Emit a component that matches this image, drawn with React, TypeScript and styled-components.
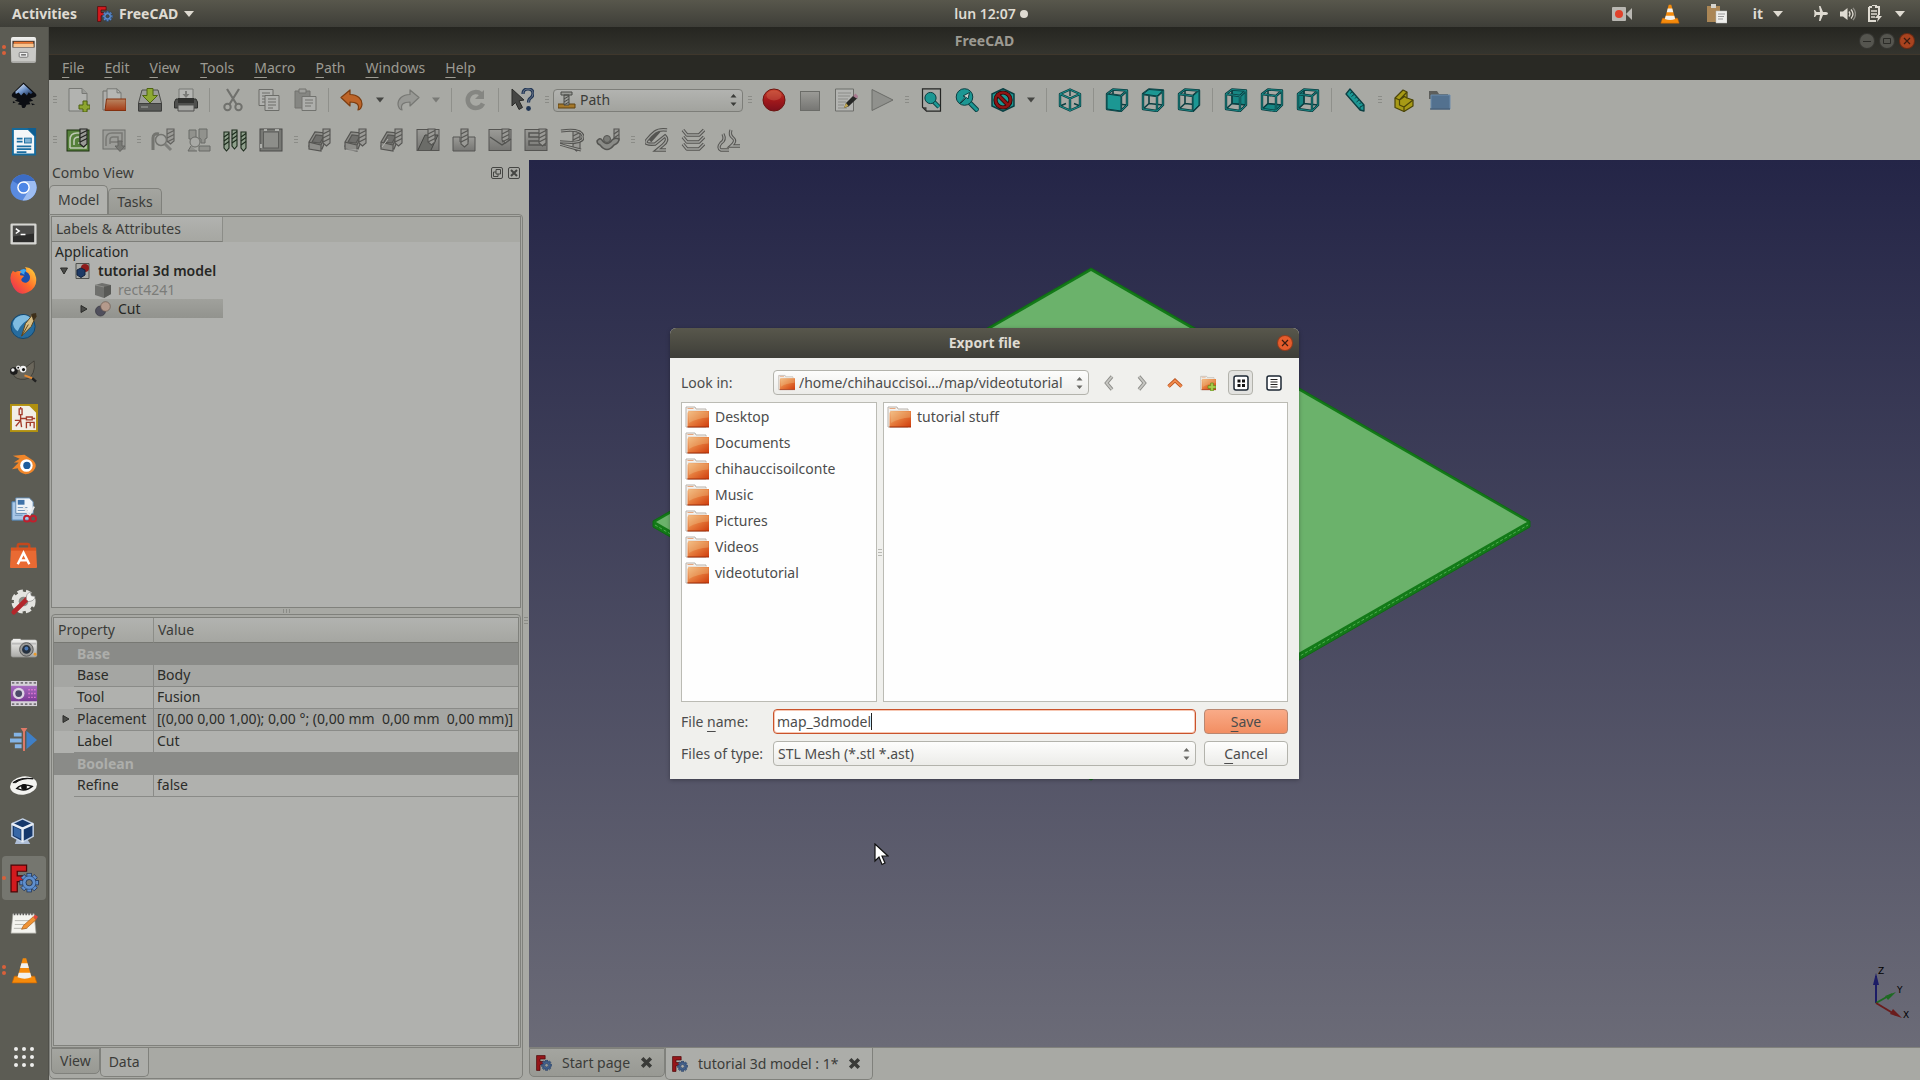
import React from "react";
import styled, { createGlobalStyle, css } from "styled-components";

const GlobalStyle = createGlobalStyle`
  *, *::before, *::after { box-sizing: border-box; }
  html, body { margin: 0; height: 100%; }
  #root { height: 100%; }
  body, button, input, select, table {
    font-family: "Noto Sans", "Open Sans", sans-serif;
    font-size: 14px;
    line-height: 20px;
  }
  button, input, select { margin: 0; padding: 0; border: 0; background: none; color: inherit; }
  ul { margin: 0; padding: 0; list-style: none; }
  svg { display: block; flex: none; }
  u { text-underline-offset: 4px; text-decoration-thickness: 1px; }
`;

const c = {
  panel: "#a8a9a4",
  field: "#b0b1ae",
  line: "#80817c",
  text: "#3b3c39",
};

/* ---------- shell ---------- */

const Desktop = styled.div`
  position: relative;
  display: flex;
  flex-direction: column;
  min-height: 100vh;
  background: ${c.panel};
  color: ${c.text};
  overflow: hidden;
`;

const TopBar = styled.header`
  display: grid;
  grid-template-columns: 1fr auto 1fr;
  align-items: center;
  height: 27px;
  background: linear-gradient(#58574c, #3e3e38);
  color: #dfdbd2;
`;

const BarGroup = styled.div<{ $end?: boolean }>`
  display: flex;
  align-items: center;
  gap: ${(p) => (p.$end ? 18 : 20)}px;
  padding: 0 ${(p) => (p.$end ? 15 : 12)}px 0 12px;
  justify-content: ${(p) => (p.$end ? "flex-end" : "flex-start")};
`;

const BarButton = styled.button<{ $gap?: number }>`
  display: flex;
  align-items: center;
  gap: ${(p) => p.$gap ?? 6}px;
  font-weight: 700;
`;

const Clock = styled(BarButton)`
  padding-left: 62px;
  gap: 4px;
  font-weight: 600;
`;

const Dot = styled.span`
  width: 8px;
  height: 8px;
  border-radius: 50%;
  background: #dfdbd2;
`;

const TrayGroup = styled.div<{ $gap: number; $after?: number }>`
  display: flex;
  align-items: center;
  gap: ${(p) => p.$gap}px;
  margin-right: ${(p) => p.$after ?? 0}px;
`;

const Body = styled.div`
  flex: 1;
  display: flex;
  min-height: 0;
`;

const Dock = styled.nav`
  flex: none;
  width: 49px;
  display: flex;
  flex-direction: column;
  background: #5c5c54;
  border-right: 1px solid #50504a;
`;

const DockButton = styled.button<{ $active?: boolean; $last?: boolean }>`
  position: relative;
  display: grid;
  place-items: center;
  width: 44px;
  height: 44px;
  margin: 1px 2px;
  border-radius: 4px;
  background: ${(p) => (p.$active ? "#75766f" : "transparent")};
  ${(p) => p.$last && css`margin-top: auto;`}
`;

const Running = styled.span`
  position: absolute;
  left: 0;
  top: 0;
  bottom: 0;
  display: flex;
  flex-direction: column;
  justify-content: center;
  gap: 2px;
  & > i {
    width: 4px;
    height: 4px;
    border-radius: 50%;
    background: #d9603a;
  }
`;

const Window = styled.main`
  flex: 1;
  min-width: 0;
  display: flex;
  flex-direction: column;
`;

const TitleBar = styled.div`
  display: grid;
  grid-template-columns: 1fr auto 1fr;
  align-items: center;
  height: 28px;
  padding: 0 5px;
  background: linear-gradient(#262621, #34342e);
  border-bottom: 1px solid #3f372c;
  color: #9c9a92;
  font-weight: 700;
`;

const WindowControls = styled.div`
  grid-column: 3;
  display: flex;
  justify-content: flex-end;
  gap: 4px;
`;

const RoundButton = styled.button<{ $tone: string }>`
  display: grid;
  place-items: center;
  width: 16px;
  height: 16px;
  border-radius: 50%;
  background: ${(p) => p.$tone};
  border: 1px solid rgba(0, 0, 0, 0.35);
`;

const TitleText = styled.span`
  grid-column: 2;
`;

const MenuBar = styled.nav`
  display: flex;
  align-items: center;
  height: 25px;
  padding: 0 3px;
  background: #292924;
  color: #9c9a92;
`;

const MenuButton = styled.button`
  padding: 0 10px;
`;

const ToolArea = styled.div`
  height: 80px;
  display: flex;
  flex-direction: column;
`;

const ToolRow = styled.div`
  display: flex;
  align-items: center;
  height: 40px;
`;

const ToolButton = styled.button`
  display: grid;
  place-items: center;
  width: 36px;
  height: 36px;
`;

const DropButton = styled.button`
  display: grid;
  place-items: center;
  width: 20px;
  height: 36px;
`;

const Grip = styled.span`
  width: 13px;
  height: 8px;
  background: repeating-linear-gradient(#8b8c87 0 1px, transparent 1px 3px) center / 4px 8px no-repeat;
  &:first-child { width: 11px; }
`;

const Separator = styled.span`
  width: 11px;
  height: 24px;
  background: linear-gradient(#8f908b, #8f908b) center / 1px 100% no-repeat;
`;

/* ---------- combo boxes ---------- */

const ComboShell = styled.span<{ $dim?: boolean; $width?: number }>`
  display: flex;
  align-items: center;
  gap: 4px;
  ${(p) => (p.$width ? css`width: ${p.$width}px;` : css`width: 100%;`)}
  height: ${(p) => (p.$dim ? 23 : 25)}px;
  padding: 0 5px 0 4px;
  border: 1px solid ${(p) => (p.$dim ? "#7d7e79" : "#b3b3ac")};
  border-radius: 4px;
  background: ${(p) => (p.$dim ? "linear-gradient(#b2b3b0, #a2a39e)" : "linear-gradient(#fdfdfc, #ecece9)")};
  color: ${(p) => (p.$dim ? c.text : "#4c4c4c")};
`;

const ComboSelect = styled.select`
  appearance: none;
  flex: 1;
  min-width: 0;
  height: 20px;
  outline: none;
`;

function Combo(props: { id: string; label?: string; value: string; icon?: React.ReactNode; dim?: boolean; width?: number }) {
  return (
    <ComboShell $dim={props.dim} $width={props.width}>
      {props.icon}
      <ComboSelect id={props.id} aria-label={props.label} defaultValue={props.value}>
        <option>{props.value}</option>
      </ComboSelect>
      <svg width="7" height="14" viewBox="0 0 7 14" fill={props.dim ? "#3b3c39" : "#6a6a66"}>
        <path d="M.5 4.500 3.500 1l3 3.500zM.5 9.500 3.500 13l3-3.500z" />
      </svg>
    </ComboShell>
  );
}

/* ---------- left panel ---------- */

const Work = styled.div`
  flex: 1;
  display: flex;
  min-height: 0;
`;

const SidePanel = styled.aside`
  flex: none;
  width: 474px;
  display: flex;
  flex-direction: column;
  padding-bottom: 1px;
`;

const PanelHead = styled.div`
  display: flex;
  align-items: center;
  gap: 5px;
  height: 25px;
  padding: 0 3px;
`;

const PanelTitle = styled.h2`
  flex: 1;
  margin: 0;
  font: inherit;
`;

const TabRow = styled.div<{ $bottom?: boolean }>`
  display: flex;
  align-items: ${(p) => (p.$bottom ? "flex-start" : "flex-end")};
  height: 29px;
`;

const Tab = styled.button<{ $active?: boolean; $bottom?: boolean }>`
  display: flex;
  align-items: center;
  justify-content: center;
  height: ${(p) => (p.$active ? 29 : 26)}px;
  padding: 0 8px;
  border: 1px solid ${c.line};
  background: ${(p) => (p.$active ? (p.$bottom ? "#acada9" : "#b0b1ad") : "linear-gradient(#a4a5a0, #989993)")};
  ${(p) =>
    p.$bottom
      ? css`border-top-width: ${p.$active ? 0 : 1}px; border-radius: 0 0 5px 5px;`
      : css`border-bottom-width: 0; border-radius: 5px 5px 0 0;`}
  & + & { border-left-width: ${(p) => (p.$active ? 1 : 0)}px; }
`;

const MdiTab = styled(Tab)`
  height: ${(p) => (p.$active ? 32 : 29)}px;
  gap: 10px;
  padding: 0 11px 0 6px;
`;

const Pane = styled.div`
  flex: 1;
  min-height: 0;
  display: flex;
  flex-direction: column;
  padding: 1px;
  border: 1px solid ${c.line};
  border-radius: 0 4px 5px 5px;
`;

const TreeBox = styled.div`
  flex: 393 1 0;
  min-height: 0;
  border: 1px solid ${c.line};
  background: ${c.field};
`;

const TreeHead = styled.div`
  height: 25px;
  background: ${c.panel};
`;

const TreeHeadCell = styled.div`
  width: 171px;
  height: 25px;
  padding: 2px 4px;
  border-right: 1px solid #8c8d88;
  border-bottom: 1px solid #7d7e79;
  background: linear-gradient(#b1b2af, #a6a7a2);
`;

const TreeRow = styled.li<{ $level: number; $selected?: boolean; $muted?: boolean; $bold?: boolean }>`
  display: flex;
  align-items: center;
  gap: 7px;
  width: 171px;
  height: 19px;
  white-space: nowrap;
  padding-left: ${(p) => [3, 8, 28, 43][p.$level]}px;
  color: ${(p) => (p.$muted ? "#7b7c79" : "#262724")};
  font-weight: ${(p) => (p.$bold ? 600 : 400)};
  ${(p) => p.$selected && css`background: linear-gradient(#a0a19c, #92938e);`}
`;

const HSplit = styled.div`
  height: 6px;
  background: repeating-linear-gradient(90deg, #8b8c87 0 1px, transparent 1px 3px) center / 7px 4px no-repeat;
`;

const VSplit = styled.div`
  width: 6px;
  background: repeating-linear-gradient(#8b8c87 0 1px, transparent 1px 3px) center / 4px 7px no-repeat;
`;

const PropFrame = styled.div`
  flex: 433 1 0;
  min-height: 0;
  display: flex;
  padding: 2px 1px 1px;
  border: 1px solid ${c.line};
  border-radius: 4px 4px 0 0;
`;

const PropBox = styled.div`
  flex: 1;
  border: 1px solid ${c.line};
  background: ${c.field};
`;

const PropTable = styled.table`
  width: 100%;
  table-layout: fixed;
  border-collapse: separate;
  border-spacing: 0;
  color: #2b2c29;
  white-space: nowrap;
  th, td { height: 22px; padding: 0; text-align: left; font-weight: 400; }
`;

const HeadCell = styled.th`
  && { height: 25px; padding: 0 4px; color: ${c.text}; }
  background: linear-gradient(#b2b3b0, #a5a6a1);
  border-bottom: 1px solid #777873;
  & + & { border-left: 1px solid #8c8d88; }
`;

const GroupCell = styled.th`
  && { padding-left: 23px; font-weight: 700; }
  background: #8a8b88;
  color: #adaeab;
`;

const PropRow = styled.tr<{ $alt?: boolean }>`
  background: ${(p) => (p.$alt ? "#a5a6a3" : c.field)};
  td, th { border-bottom: 1px solid #8a8b88; }
  td:first-child { border-bottom-color: transparent; }
  && > td:first-child { padding-left: 8px; }
  && > th { padding-left: 3px; }
  && > td:last-child { padding-left: 3px; border-left: 1px solid #8a8b88; }
`;

/* ---------- 3D view ---------- */

const Mdi = styled.section`
  flex: 1;
  min-width: 0;
  display: flex;
  flex-direction: column;
`;

const Viewport = styled.div`
  position: relative;
  flex: 1;
  min-height: 0;
  background: linear-gradient(#242547, #6b6b77);
  & > svg:first-child { width: 100%; height: 100%; }
`;

const AxisCross = styled.div`
  position: absolute;
  right: 10px;
  bottom: 25px;
`;

const MdiTabs = styled.div`
  display: flex;
  align-items: flex-start;
  height: 33px;
  border-top: 1px solid ${c.line};
`;

/* ---------- dialog ---------- */

const Overlay = styled.div`
  position: absolute;
  inset: 27px 0 0 49px;
  display: grid;
  place-items: center;
`;

const Dialog = styled.section`
  width: 629px;
  border-radius: 6px 6px 0 0;
  background: #f0f0ed;
  color: #4c4c4c;
  box-shadow: 0 1px 4px rgba(0, 0, 0, 0.3);
`;

const DialogTitle = styled.div`
  display: grid;
  grid-template-columns: 1fr auto 1fr;
  align-items: center;
  height: 30px;
  padding: 0 6px;
  border-radius: 6px 6px 0 0;
  background: linear-gradient(#58574c, #3e3e38);
  color: #dfdbd2;
  font-weight: 700;
`;

const DialogBody = styled.form`
  display: flex;
  flex-direction: column;
  gap: 7px;
  padding: 12px 11px 13px;
`;

const LookRow = styled.div`
  display: grid;
  grid-template-columns: 92px 316px 1fr;
  align-items: center;
  height: 25px;
`;

const NavButtons = styled.div`
  display: flex;
  padding-left: 3px;
`;

const NavButton = styled.button<{ $on?: boolean }>`
  display: grid;
  place-items: center;
  width: 25px;
  height: 25px;
  margin: 0 4px;
  border-radius: 4px;
  ${(p) => p.$on && css`background: #e2e2df; border: 1px solid #b3b3ac;`}
`;

const Lists = styled.div`
  display: grid;
  grid-template-columns: 196px 6px 1fr;
  height: 300px;
`;

const FileList = styled.ul`
  padding: 1px 3px;
  border: 1px solid #bbbbb4;
  background: #fefefe;
`;

const ListSplit = styled.div`
  background: repeating-linear-gradient(#b9b9b4 0 1px, transparent 1px 3px) center / 4px 7px no-repeat;
`;

const FileRow = styled.li`
  display: flex;
  align-items: center;
  gap: 6px;
  height: 26px;
`;

const FieldRow = styled.div`
  display: grid;
  grid-template-columns: 92px 1fr 84px;
  align-items: center;
  height: 25px;
`;

const FieldCell = styled.div`
  padding-right: 8px;
`;

const NameBox = styled.div`
  display: flex;
  align-items: center;
  height: 25px;
  padding: 0 3px;
  border: 1px solid #c9532c;
  border-radius: 4px;
  background: #fff;
  box-shadow: inset 0 0 0 1px #f6c7b3;
`;

const NameInput = styled.input`
  field-sizing: content;
  outline: none;
  height: 20px;
`;

const Caret = styled.span`
  width: 1px;
  height: 17px;
  background: #222;
`;

const PushButton = styled.button<{ $primary?: boolean }>`
  height: 25px;
  border-radius: 4px;
  border: 1px solid ${(p) => (p.$primary ? "#b98872" : "#b3b3ac")};
  background: ${(p) => (p.$primary ? "linear-gradient(#f9ab88, #f28e62)" : "linear-gradient(#fefefd, #ecece9)")};
`;

const Pointer = styled.div`
  position: absolute;
  left: 874px;
  top: 843px;
`;

/* ---------- icons ---------- */

const Defs = () => (
  <svg width="0" height="0" aria-hidden="true">
    <defs>
      <linearGradient id="orange" x1="0" y1="0" x2="1" y2="1">
        <stop offset="0" stopColor="#f3b982" /><stop offset=".5" stopColor="#e5793a" /><stop offset="1" stopColor="#cf3c0c" />
      </linearGradient>
      <linearGradient id="dimOrange" x1="0" y1="0" x2="0" y2="1">
        <stop offset="0" stopColor="#b98662" /><stop offset="1" stopColor="#a63c16" />
      </linearGradient>
      <linearGradient id="silver" x1="0" y1="0" x2="0" y2="1">
        <stop offset="0" stopColor="#f0f0ee" /><stop offset="1" stopColor="#a9a9a6" />
      </linearGradient>
      <linearGradient id="grey" x1="0" y1="0" x2="0" y2="1">
        <stop offset="0" stopColor="#9b9b97" /><stop offset="1" stopColor="#767673" />
      </linearGradient>
      <linearGradient id="red" x1="0" y1="0" x2="0" y2="1">
        <stop offset="0" stopColor="#c9452f" /><stop offset=".5" stopColor="#a3191b" /><stop offset="1" stopColor="#7c0f1c" />
      </linearGradient>
      <linearGradient id="purple" x1="0" y1="0" x2="0" y2="1">
        <stop offset="0" stopColor="#a86bc0" /><stop offset="1" stopColor="#7a3a96" />
      </linearGradient>
      <linearGradient id="ink" x1="0" y1="0" x2="1" y2="1">
        <stop offset="0" stopColor="#fff" /><stop offset=".5" stopColor="#6f93c8" /><stop offset="1" stopColor="#0d1f40" />
      </linearGradient>
      <linearGradient id="fox" x1="0" y1="1" x2="1" y2="0">
        <stop offset="0" stopColor="#e5245e" /><stop offset=".5" stopColor="#ff6a2a" /><stop offset="1" stopColor="#ffde3b" />
      </linearGradient>
    </defs>
  </svg>
);

const Down = ({ fill = "#dfdbd2", w = 10 }: { fill?: string; w?: number }) => (
  <svg width={w} height="6" viewBox="0 0 10 6"><path d="M0 0h10L5 6z" fill={fill} /></svg>
);

const Gear = ({ x, y, r, fill, hole }: { x: number; y: number; r: number; fill: string; hole: string }) => (
  <g transform={`translate(${x} ${y})`}>
    {[0, 45, 90, 135].map((a) => (
      <rect key={a} x={-r * 0.24} y={-r} width={r * 0.48} height={r * 2} transform={`rotate(${a})`} fill={fill} stroke="#1b3156" strokeWidth=".7" />
    ))}
    <circle r={r * 0.72} fill={fill} stroke="#1b3156" strokeWidth=".5" />
    <circle r={r * 0.34} fill={hole} stroke="#1b3156" strokeWidth=".8" />
  </g>
);

const Logo = ({ size, hole = "#75766f", dim }: { size: number; hole?: string; dim?: boolean }) => (
  <svg width={size} height={size} viewBox="0 0 28 28">
    <path d="M1 1h15v6H7v4.500h7v5.500H7v10H1z" fill={dim ? "#96161a" : "#d21a1e"} stroke="#4a0708" strokeWidth="1.200" />
    <Gear x={18.5} y={18} r={9} fill={dim ? "#46648f" : "#5f8fce"} hole={hole} />
  </svg>
);

const Cone = ({ size }: { size: number }) => (
  <svg width={size} height={size} viewBox="0 0 24 24">
    <path d="M3 17h18l2 6H1z" fill="#f58a0b" stroke="#c96500" strokeWidth=".6" />
    <path d="M10.500 1h3l5 18q-6.500 3-13 0z" fill="#f58a0b" />
    <path d="M9.300 5.500h5.400l1.200 4.300H8.100zM6.900 14h10.200l1.100 4q-6 2.500-12.400 0z" fill="#f1f1ef" />
  </svg>
);

const dockIcons: Record<string, React.ReactNode> = {
  Files: (<>
    <rect x="1" y="1" width="26" height="27" rx="2" fill="url(#silver)" />
    <path d="M2.500 5h23v7h-23z" fill="#4a3a30" /><path d="M4 6h20v2H4z" fill="#f0762e" /><path d="M3.500 8h21v3.500h-21z" fill="#f8c48f" />
    <path d="M2 12.500h24V26H2z" fill="#c9c9c6" /><rect x="9.500" y="17" width="9" height="5" rx="1" fill="#eee" stroke="#777" /><path d="M11.500 19.500h5" stroke="#666" strokeWidth="1.500" />
  </>),
  Inkscape: (<>
    <path d="M14 .5 26.500 12q2 2.500-.5 3.500l-5 1.500 3 2.500-4 1 1 2.500-4 .5q-1 3.500-3 3.500t-2-3l-4-1 2-2-5-1.500 2.500-2-5-2q-1.500-1.500 0-3.500z" fill="#0b0d12" />
    <path d="M14 2 23.500 11q-2 3-4-.5l-2 3.500-3-3-3 3-2.500-3-3 1.500L5.500 10z" fill="url(#ink)" />
    <path d="m22 22 4 1-3 1zM3 20l3 1-3 1z" fill="#0b0d12" />
  </>),
  Writer: (<>
    <path d="M3 1h16l7 7v19.500H3z" fill="#f4f6f8" stroke="#156a9c" strokeWidth="2" /><path d="M18 0h9v9z" fill="#0f5f93" />
    <path d="M7 11h6M7 14h6M7 19h15M7 22h15M7 25h10" stroke="#1d6ea0" strokeWidth="1.800" /><rect x="15" y="10.500" width="7" height="5" fill="#7fb2d4" stroke="#1d6ea0" />
  </>),
  Chromium: (<>
    <circle cx="14" cy="14" r="13.500" fill="#5a8be0" /><path d="M14 14 2.500 7A13.500 13.500 0 0 1 25.700 7.300H14z" fill="#3c6cc4" /><path d="M25.700 7.300A13.500 13.500 0 0 1 13 27.500l6.500-10.500q1.500-5-5.500-9.700z" fill="#9dbdf2" />
    <circle cx="14" cy="14" r="6.500" fill="#fff" /><circle cx="14" cy="14" r="5" fill="#4d86e6" />
  </>),
  Terminal: (<>
    <rect x=".5" y="3.500" width="27" height="22" rx="1.500" fill="#d6d6d2" /><rect x="3" y="6" width="22" height="17" fill="#2c2c2b" /><path d="M3 6h22v8L3 17z" fill="#4b4b49" />
    <path d="m6 9 3.500 2.500L6 14M11 15h5" stroke="#fff" strokeWidth="1.500" fill="none" />
  </>),
  Firefox: (<>
    <circle cx="14" cy="14.500" r="11" fill="#1c4fae" /><path d="M9 6q5-5 9-1-4 1-3 4z" fill="#3ea6ef" />
    <path d="M3 5q1 1 2.500 1.500Q9 4 12 6q-2 1-1.500 3.500l3.500.5q1 1-1.500 2.500l-1 2q2 4 6 2.500 4-2 3-7-1-3-4-4 1-3-1-5 10 1 11.500 11T19 27 3.500 22 3 5z" fill="url(#fox)" />
  </>),
  Scribus: (<>
    <circle cx="13.500" cy="15" r="12.500" fill="#276c9e" stroke="#13466e" /><path d="M3 12a11 11 0 0 1 19-5Q12 10 8 20q-4-2-5-8z" fill="#7fbbe0" />
    <path d="m12 25 4-13 8-10 3 2-5 11z" fill="#d7bd84" stroke="#5a431c" /><path d="m12 25 7-12" stroke="#5a431c" /><path d="m22 2 5-1 .5 4-3.500 4z" fill="#3d2f1a" />
  </>),
  Gimp: (<>
    <path d="M3 14q1-4 6-5l7 1 9-7q1 8-1 12-3 8-13 7-8-1-8-8z" fill="#6a665b" stroke="#33312b" strokeWidth=".7" />
    <circle cx="4" cy="13.500" r="4" fill="#1c1c1c" /><circle cx="3" cy="12.500" r="1.800" fill="#eee" />
    <circle cx="13.500" cy="11.500" r="3.500" fill="#f1f1f1" /><circle cx="14" cy="12" r="1.600" fill="#111" /><circle cx="8.500" cy="10" r="2.200" fill="#f1f1f1" /><circle cx="8.500" cy="10" r="1" fill="#111" />
    <path d="m15 18 8 3" stroke="#e28a34" strokeWidth="2" /><path d="m23 21 4 3.500" stroke="#222" strokeWidth="2.500" />
  </>),
  Eeschema: (<>
    <rect x="1" y="1" width="27" height="27" fill="#f2efe6" stroke="#b09010" strokeWidth="2" /><path d="M18 0h11v11z" fill="#b09010" />
    <path d="M11 3v2m0 6v6m-6 0h6m0-2h6m6 0h3M9.500 5h3v6h-3zM17 13.500h6v3h-6zM11 17l-5 6m5-6 1 7m5 1v-6h8v6m-4-6v4" stroke="#a33b2a" strokeWidth="1.400" fill="none" />
  </>),
  Blender: (<>
    <path d="m3 6 12-1 9 6q4 4 2 8-3 6-10 6-7-1-8-6l-6 1 7-7H4l6-4z" fill="#f0862a" /><circle cx="17" cy="16" r="6.500" fill="#fff" /><circle cx="17.500" cy="16" r="3.800" fill="#1f5d9c" />
  </>),
  Clips: (<>
    <path d="M2 6h15l3 4v15H2z" fill="#a9c8e8" stroke="#4d7fb0" /><path d="M6 2h14l4 4v12H6z" fill="#eef3f8" stroke="#5f87ad" /><rect x="8" y="4" width="7" height="5" fill="#3f72a8" /><path d="M8 12h10M8 15h10M5 20h8" stroke="#6e93b8" />
    <path d="m14 11 7 11m4-11-6 11" stroke="#e8e8e8" strokeWidth="2" /><circle cx="17.500" cy="23.500" r="3" fill="none" stroke="#c01f2d" strokeWidth="2" /><circle cx="24" cy="23.500" r="3" fill="none" stroke="#c01f2d" strokeWidth="2" />
  </>),
  Software: (<>
    <path d="M8 7V4q0-2 2-2h8q2 0 2 2v3" fill="none" stroke="#c3481d" strokeWidth="2.500" /><path d="M1 6h26l1 20q0 1-1 1H1q-1 0-1-1z" fill="#e96a33" /><path d="M1 6h26v3H1z" fill="#d9531f" />
    <path d="m8 23 6-12 6 12m-10-4h8" stroke="#fff" strokeWidth="2.500" fill="none" />
  </>),
  Tweaks: (<>
    <circle cx="14" cy="14" r="10" fill="#e4e4e0" stroke="#e4e4e0" strokeWidth="5" strokeDasharray="5.200 3" /><circle cx="14" cy="14" r="10" fill="#e4e4e0" /><circle cx="14" cy="14" r="5" fill="#8b8b86" />
    <path d="m4 25 14-14" stroke="#b3272b" strokeWidth="5" strokeLinecap="round" /><path d="M17 12q-1-6 4-8l1 4 4 1q-1 5-7 5z" fill="#f2f2ef" stroke="#888" strokeWidth=".7" />
  </>),
  Camera: (<>
    <rect x="1" y="6" width="27" height="18" rx="2" fill="url(#silver)" stroke="#7b7b78" strokeWidth=".5" /><path d="M3 5h8v2H3z" fill="#eee" /><path d="M2 9h25v2H2z" fill="#bbb" />
    <circle cx="17" cy="16" r="7" fill="#989896" stroke="#555" /><circle cx="17" cy="16" r="4.500" fill="#26313f" /><circle cx="17" cy="15" r="2" fill="#4a78b5" /><circle cx="26" cy="21" r="1.500" fill="#e99a2c" />
  </>),
  Recorder: (<>
    <rect x="1" y="1" width="27" height="26" fill="#d6d2d8" /><path d="M2 3h25M2 25h25" stroke="#77727a" strokeWidth="2" strokeDasharray="2.500 2" /><rect x="1" y="6" width="27" height="16" fill="url(#purple)" />
    <circle cx="9" cy="14" r="6" fill="#dcd2e2" /><circle cx="9" cy="14" r="3.500" fill="#4b4a68" /><path d="M19 10h8M19 14h8M19 18h8" stroke="#e87bd8" strokeWidth="1.500" strokeDasharray="1.500 1.500" />
  </>),
  Editor: (<>
    <path d="M4 7h8v4H4zM0 13h12v4H0zM5 19h7v4H5z" fill="#84b4e6" /><path d="m17 5 11 9.500L17 24z" fill="#3f7fc6" /><path d="M11 2h7l-2.500 4v20h-2V6z" fill="#e07a68" />
  </>),
  Viewer: (<>
    <ellipse cx="14" cy="14" rx="14" ry="9.500" transform="rotate(-8 14 14)" fill="#f3f3f0" /><path d="M3 11q8-6 21-4-12-1-18 4z" fill="#111" stroke="#111" /><path d="M7 17q6-6 16-2-6 5-13 3z" fill="none" stroke="#111" strokeWidth="1.500" /><circle cx="14.500" cy="15.500" r="3" fill="#111" />
  </>),
  VirtualBox: (<>
    <path d="M7 22h11l3 5H5z" fill="#aebed6" /><path d="m13 1 11 5v13l-11 6-11-6V6z" fill="#16386b" stroke="#c4d3e8" strokeWidth="1.500" /><path d="m2 6 11 5 11-5M13 11v14" stroke="#e8eef6" strokeWidth="2.500" fill="none" /><path d="m4 9 7 3.500v9L4 18z" fill="#3767a6" />
  </>),
  FreeCAD: null,
  Notes: (<>
    <path d="M3 4h22l2 20H1z" fill="#f4f4ef" stroke="#9a9a94" strokeWidth=".7" /><path d="M4 4h20" stroke="#5b5b58" strokeWidth="3" strokeDasharray="1.500 1.500" /><path d="M5 11h17M5 15h15M4 19h14" stroke="#b6b6b0" />
    <path d="m12 20 2-4 10-9 3 3-10 9z" fill="#f09334" stroke="#a85b12" strokeWidth=".7" /><path d="m24 7 2-2 3 2-2 3z" fill="#e2483a" />
  </>),
  VLC: null,
};

const runningCount: Record<string, number> = { Files: 2, FreeCAD: 1, VLC: 2 };

/* drill bit shared by the machining icons */
const Drill = ({ x, y = 0, w = 7, h = 18, line = "#555552", fill = "#9a9a96" }: { x: number; y?: number; w?: number; h?: number; line?: string; fill?: string }) => (
  <g transform={`translate(${x} ${y})`} stroke={line} strokeWidth="1.100" fill={fill}>
    <path d={`M0 1h${w}v${h - 4}l${-w / 2} 3${-w / 2 < 0 ? "" : " "}${-w / 2}-3z`} />
    <path d={`M0 6l${w}-3.500M0 10l${w}-3.500M0 14l${w}-3.500`} fill="none" />
  </g>
);

const TEAL = "#1c9793";
const EDGE = "#0b3f42";

const cubeFaces: Record<string, string> = {
  front: "M2 6l14 2v15L2 21z",
  top: "M2 6l6-4.500 14 1L16 8z",
  right: "M16 8l6-5.500V17l-6 6z",
  rear: "M8 1.500l14 1V17L8 15.500z",
  bottom: "M2 21l6-5.500L22 17l-6 6z",
  left: "M2 6l6-4.500v14L2 21z",
};

const Cube = ({ face }: { face: string }) => {
  const back = "M8 1.500v14L2 21M8 15.500 22 17";
  const outline = "M2 6l6-4.500 14 1V17l-6 6-14-2zM2 6l14 2v15M16 8l6-5.500";
  const hidden = ["rear", "bottom", "left"].includes(face);
  const panel = <path d={cubeFaces[face]} fill={hidden ? "#178784" : TEAL} stroke={EDGE} />;
  return (
    <g fill="none" strokeLinejoin="round">
      {hidden && panel}
      <path d={back} stroke={EDGE} strokeWidth="1.600" />
      <path d={outline} stroke={EDGE} strokeWidth="2.400" />
      <path d={outline} stroke={TEAL} strokeWidth=".8" />
      {!hidden && panel}
    </g>
  );
};

const sheets = (<g fill="#8d8d89" stroke="#555552" strokeWidth="1.200"><path d="M1 18 7 8l12 1-5 12z" /><path d="M1 14 7 4l11 1-5 12zM1 14v7l12 2v-6" /><path d="m4 14 4-7 8 1-4 7z" fill="#6f6f6c" /></g>);
const slab = <rect x="1" y="1.500" width="22" height="21" fill="url(#grey)" stroke="#555552" />;

const toolIcons: Record<string, React.ReactNode> = {
  New: (<><path d="M3 .5h13l5 5V23H3z" fill="#b2b3b0" stroke="#777874" /><path d="M16 .5v5h5" fill="#9b9c98" stroke="#777874" /><path d="M17 13h4v4h3v4h-3v3h-4v-3h-4v-4h4z" fill="#8da52f" stroke="#4c6110" /></>),
  Open: (<><path d="M1 22V3h6l2 2h3v17z" fill="#aeaeab" stroke="#6e6f6b" /><path d="M5 12V.8h10l4 4V12" fill="#b6b7b4" stroke="#777874" /><path d="M15 .8v4h4" fill="none" stroke="#777874" /><path d="M3 22.500 4.500 11H24v11.500z" fill="url(#dimOrange)" stroke="#83300f" /></>),
  Save: (<><path d="M4 2h16l3.500 13v8H.5v-8z" fill="#9c9d9a" stroke="#4d4e4b" /><path d="M.5 15.500h23V23H.5z" fill="#595a58" stroke="#3d3e3c" /><path d="M3 19h7" stroke="#a5a6a3" /><path d="M9 .5h6v7h4.500L12 15 4.500 7.500H9z" fill="#8ea932" stroke="#4f6513" /></>),
  Print: (<><path d="M5 1h14v11H5z" fill="#b4b5b2" stroke="#777874" /><path d="M11 3h2v3h2.500L12 10 8.500 6H11z" fill="#7b7c79" /><path d="M2 11h20l1.500 3v6H.5v-6z" fill="#4f504e" stroke="#2f302e" /><path d="M4 10h16v5H4z" fill="#30312f" /><path d="M4 17h16v6H4z" fill="#a5a6a3" stroke="#50514f" /></>),
  Cut: (<g fill="none" stroke="#70716d"><path d="m6 1 10 16M18 1 8 17" strokeWidth="2.200" /><circle cx="6.500" cy="19" r="3.200" strokeWidth="2" /><circle cx="17.500" cy="19" r="3.200" strokeWidth="2" /></g>),
  Copy: (<g fill="#b0b1ae" stroke="#6c6d69"><path d="M2 1.500h14v16H2z" /><path d="M5 5h8M5 8h4M5 11h3M5 14h3" /><path d="M8 7.500h14v15H8z" /><path d="M11 11h8M11 14h8M11 17h8M11 20h5" /></g>),
  Paste: (<g stroke="#72736f"><path d="M2 3h15v17H2z" fill="#858682" /><path d="M6 1h7v4H6z" fill="#a0a19d" /><path d="M9 8.500h14v14H9z" fill="#aeafac" /><path d="M12 12h8M12 15h8M12 18h6" /></g>),
  Undo: (<path d="M1 9.500 10 2v4.500c8 0 12 5 12 9.500 0 3-2 6-4 6 2-6-2-8-8-8V18z" fill="#bd6428" stroke="#7c3d10" strokeWidth="1.200" strokeLinejoin="round" />),
  Redo: (<path d="M23 9.500 14 2v4.500C6 6.500 2 11.500 2 16c0 3 2 6 4 6-2-6 2-8 8-8v4z" fill="#989995" stroke="#777874" strokeWidth="1.200" strokeLinejoin="round" />),
  Refresh: (<><path d="M20 15.500a8 8 0 1 1-2-9.500" fill="none" stroke="#858682" strokeWidth="4.500" /><path d="M21 2v9h-9z" fill="#858682" /></>),
  Help: (<><path d="m2 1 12 11-5 .8 3.500 6.700-3.500 2-3.500-7L2 18z" fill="#454644" stroke="#2a2b29" /><path d="M13 6q0-5 5-5t5 4.500q0 3-2.500 4.500-2 1.200-2 4.500" fill="none" stroke="#213654" strokeWidth="3.200" /><path d="M13 6q0-5 5-5t5 4.500q0 3-2.500 4.500-2 1.200-2 4.500" fill="none" stroke="#7c8798" strokeWidth=".8" /><circle cx="18.500" cy="20.500" r="2.400" fill="#213654" /></>),
  Record: (<><circle cx="12" cy="12" r="11" fill="url(#red)" stroke="#6c1510" /><ellipse cx="12" cy="7.500" rx="7.500" ry="5" fill="#d8775c" opacity=".35" /></>),
  Stop: (<rect x="2.500" y="3.500" width="19" height="19" fill="url(#grey)" stroke="#6b6c68" />),
  Macro: (<><path d="M1.500 1h18v22h-18z" fill="#b3b4b1" stroke="#6d6e6a" /><path d="M4 5h13M4 8h12M4 11h10M4 14h8M4 17h6M4 20h9" stroke="#8b8c88" /><path d="m10 20 2-5 8-8 3.500 3-9 8.500z" fill="#262725" /><path d="m10 20 2-5 2.500 3z" fill="#c3a84f" /><path d="m19 8 2.500-2.500 3 3-2 2z" fill="#a77b90" /></>),
  Play: (<path d="M2 1.500 23 12 2 22.500z" fill="#90918d" stroke="#6b6c68" strokeLinejoin="round" />),
  FitAll: (<><path d="M3.500.8h18v22.400h-14l-4-4z" fill="#a7a8a5" stroke="#252624" strokeWidth="1.200" /><path d="M3.500 19.200h4v4z" fill="#3a3b39" /><path d="m14 13 6 6" stroke={EDGE} strokeWidth="4.500" /><path d="m14 13 6 6" stroke={TEAL} strokeWidth="2.500" /><circle cx="11.500" cy="10" r="5.600" fill={TEAL} stroke={EDGE} /></>),
  FitSel: (<><path d="m14 14 9 9" stroke={EDGE} strokeWidth="5" /><path d="m14 14 8.500 8.500" stroke={TEAL} strokeWidth="3" /><circle cx="9.500" cy="9" r="8.300" fill={TEAL} stroke={EDGE} /><path d="m5 15 5.500-6L8 8l6.500-3.500L13 11l-1.500-1.500L6 15z" fill="#c8cfcb" stroke={EDGE} /></>),
  Style: (<><path d="M12 .8 23 6v12l-11 5.200L1 18V6z" fill={TEAL} stroke={EDGE} strokeWidth="1.500" /><circle cx="12" cy="12" r="7.500" fill="none" stroke="#2d0707" strokeWidth="4.200" /><path d="m7 7 10 10" stroke="#2d0707" strokeWidth="4.200" /><circle cx="12" cy="12" r="7.500" fill="none" stroke="#8e1414" strokeWidth="2.500" /><path d="m7 7 10 10" stroke="#8e1414" strokeWidth="2.500" /></>),
  Iso: (<g fill="none" strokeLinejoin="round"><path d="M12 1.500 22 6v12l-10 4.500L2 18V6zM2 6l10 4.500L22 6M12 10.500v12" stroke={EDGE} strokeWidth="2.400" /><path d="M12 1.500V8M2 18l6-2.500m14 2.500-6-2.500" stroke={EDGE} strokeWidth="1.400" /><path d="M12 1.500 22 6v12l-10 4.500L2 18V6zM2 6l10 4.500L22 6M12 10.500v12" stroke={TEAL} strokeWidth=".9" /></g>),
  Front: <Cube face="front" />, Top: <Cube face="top" />, Right: <Cube face="right" />, Rear: <Cube face="rear" />, Bottom: <Cube face="bottom" />, Left: <Cube face="left" />,
  Measure: (<><path d="m7 1 14 16v6l-4-1L3 6z" fill={TEAL} stroke={EDGE} strokeWidth="1.300" strokeLinejoin="round" /><path d="m9 4-2 1.500M11 6.500 8.500 8.500M13.500 9 12 10.500M16 12l-2.500 2M18 14.500 16.500 16M17 22v-3l4-2" stroke={EDGE} fill="none" /></>),
  Part: (<g fill="#a79a16" stroke="#4b4508" strokeLinejoin="round" strokeWidth="1.200"><path d="m3 10 8-8 4 2v6l6 2v6l-9 5.500-9-4z" /><path d="m3 10 4.500 2L15 4M7.500 12v5l4.500 2 9-7M12 19v4.500M7.500 12l5-3.500L15 10" fill="none" /></g>),
  Group: (<><path d="M1 3h8l2 3h9v5H1z" fill="#5d5e5b" /><path d="M3 7h19v14H3z" fill="#53718f" stroke="#6c8cab" /><path d="M2 21h20" stroke="#394c62" /></>),
  Job: (<><rect x="1" y="2" width="22" height="21" fill="#55803a" stroke="#1d3011" /><path d="M4 20V12q0-7 7-7h5M8 17v-4q0-4 5-4M4 20h16v-5h-8" fill="none" stroke="#bdc9b3" strokeWidth="1.600" /><Drill x={14} y={0} h={19} line="#1f201e" /></>),
  Post: (<g opacity=".8"><rect x="1" y="2" width="22" height="19" fill="#9a9b97" stroke="#5f605c" /><path d="M4 18v-7q0-6 6-6h10v9M8 16v-4q0-3 3-3h5v5H8" fill="none" stroke="#6d6e6a" strokeWidth="1.500" /><path d="M16 13h4v5h3l-5 5.500L13 18h3z" fill="#6d6e6a" stroke="#555552" /></g>),
  Inspect: (<g opacity=".85"><path d="M2 22V10q0-5 6-4" fill="none" stroke="#6b6c68" strokeWidth="3" /><Drill x={16} h={16} /><circle cx="10" cy="12" r="5.500" fill="#a9aaa6" stroke="#6b6c68" strokeWidth="1.500" /><path d="m14 16 6 6" stroke="#777874" strokeWidth="3" /></g>),
  Simulate: (<g opacity=".85" fill="#8d8e8a" stroke="#5f605c"><path d="M2 2h7v9H2zM12 1h8v9l-2 1v4h-4v-4l-2-1zM12 18h11v5H12z" /><circle cx="8" cy="14" r="5" fill="#a9aaa6" /><path d="m4 18-3 5h9" /></g>),
  Tools: (<><Drill x={1} y={3} w={5} h={20} line="#1b2a1b" fill="#8fa08c" /><Drill x={9} y={1} w={5} h={20} line="#1b2a1b" fill="#8fa08c" /><Drill x={18} y={3} w={5} h={20} line="#1b2a1b" fill="#8fa08c" /></>),
  Stock: (<g><rect x="1" y="1" width="22" height="22" fill="#777874" stroke="#4a4b48" /><rect x="4.500" y="4" width="15" height="16" fill="#8d8e8a" stroke="#5c5d5a" /><path d="M5 2h3M16 2h4M2 16v4" stroke="#c1c2be" strokeWidth="1.500" /></g>),
  Contour: <>{sheets}<Drill x={15} h={18} /></>,
  Profile: <>{sheets}<path d="M2 22h12" stroke="#b5b6b2" /><Drill x={15} h={18} /></>,
  ProfileEdges: <>{sheets}<path d="m2 19 6-8" stroke="#b5b6b2" /><Drill x={15} h={18} /></>,
  Pocket: <>{slab}<path d="M2 22 9 7h13L15 22" fill="#6b6c68" stroke="#444542" /><Drill x={12} h={17} /></>,
  Drilling: <><path d="M1 9h7v5h8V9h7v14H1z" fill="url(#grey)" stroke="#555552" /><Drill x={9} h={19} /></>,
  Engrave: <>{slab}<path d="m2 9 12 8 9-6" fill="none" stroke="#50514e" strokeWidth="1.400" /><Drill x={14} h={15} /></>,
  Face: <>{slab}<path d="M22 5H5v4h13v4H5v4h17" fill="none" stroke="#555653" strokeWidth="1.500" /><Drill x={15} h={18} /></>,
  Helix: <><Drill x={13} y={2} h={21} /><path d="M1 3q20-3 22 5t-20 6 18 8" fill="none" stroke="#555552" strokeWidth="3" /><path d="M1 3q20-3 22 5t-20 6 18 8" fill="none" stroke="#a3a4a0" strokeWidth="1" /></>,
  Surface: <><Drill x={18} y={0} w={5} h={15} /><path d="M1 13q3-4 5-1 5 7 10 0 3-3 7-1 0 4-5 6-7 9-14 0-3-1-3-4z" fill="#8a8b87" stroke="#555552" strokeWidth="1.500" /><circle cx="11" cy="11" r="3.500" fill="#7a7b77" stroke="#555552" /></>,
  Dressup: <g fill="none"><path d="M22 2q-8-1-12 2t-8 8 8 4l10-8q4 4-2 9l-6 5h9M14 3l-9 10" stroke="#555552" strokeWidth="3.500" /><path d="M22 2q-8-1-12 2t-8 8 8 4l10-8q4 4-2 9l-6 5h9" stroke="#9fa09c" strokeWidth="1.300" /></g>,
  Array: <g fill="none" strokeLinejoin="round"><path d="m2 2 4 5h12l5-5M2 9l4 5h12l5-5M2 16l4 5h12l5-5" stroke="#555552" strokeWidth="3.500" /><path d="m2 2 4 5h12l5-5M2 9l4 5h12l5-5M2 16l4 5h12l5-5" stroke="#a3a4a0" strokeWidth="1.400" /></g>,
  Copies: <g fill="none"><path d="M6 6q3 6-2 9-4 5 0 7h8M14 2q-2 5 2 8t-2 8h9" stroke="#555552" strokeWidth="3.300" /><path d="M6 6q3 6-2 9-4 5 0 7h8M14 2q-2 5 2 8t-2 8h9" stroke="#a3a4a0" strokeWidth="1.300" /></g>,
};

const Tool = ({ name }: { name: string }) => (
  <ToolButton type="button" aria-label={name}>
    <svg width="24" height="24" viewBox="0 0 24 24">{toolIcons[name]}</svg>
  </ToolButton>
);

const renderTools = (spec: string) =>
  spec.split(" ").map((t, i) => {
    if (t === "|") return <Separator key={i} />;
    if (t === ":") return <Grip key={i} />;
    if (t === "v" || t === "w")
      return (
        <DropButton key={i} type="button" aria-label="More">
          <Down fill={t === "v" ? "#454643" : "#797a76"} w={8} />
        </DropButton>
      );
    return <Tool key={i} name={t} />;
  });

const Folder = ({ size, plus }: { size: number; plus?: boolean }) => (
  <svg width={size} height={size} viewBox="0 0 24 24">
    <path d="M1 22V2h9l1 2h10v18z" fill="#f4f2ef" stroke="#b9b3ac" />
    <path d="M2.500 3.500h6" stroke="#e9a77f" />
    <path d="M3 5h19v17H3z" fill="#e9e2da" />
    <path d="M3.500 6H24v16H2.500V8z" fill="url(#orange)" />
    <path d="M4 6.500h19.500v6Q12 13 4 18z" fill="#f2cf94" opacity=".3" />
    <path d="M2.500 22H24" stroke="#9e2c08" />
    {plus && <path d="M16 12h4v4h4v4h-4v4h-4v-4h-4v-4h4z" fill="#a8cf4e" stroke="#5c8a16" />}
  </svg>
);

const CloseMark = () => (
  <svg width="13" height="13" viewBox="0 0 12 12"><path d="m2 2 8 8m0-8-8 8" stroke="#3a3b38" strokeWidth="3.200" /></svg>
);

const SmallX = () => (
  <svg width="8" height="8" viewBox="0 0 8 8"><path d="m1 1 6 6m0-6-6 6" stroke="#3a1c10" strokeWidth="1.200" /></svg>
);

const PlainButton = styled.button`
  display: grid;
  place-items: center;
`;

const menus = ["File", "Edit", "View", "Tools", "Macro", "Path", "Windows", "Help"];
const places = ["Desktop", "Documents", "chihauccisoilconte", "Music", "Pictures", "Videos", "videotutorial"];

const Triangle = ({ open }: { open?: boolean }) => (
  <svg width="8" height="8" viewBox="0 0 8 8">
    <path d={open ? "M.5 1h7L4 7z" : "M1 .5v7L7 4z"} fill="#4a4b48" stroke="#2c2d2a" />
  </svg>
);

const properties: { group?: string; name?: string; value?: string; alt?: boolean; expand?: boolean }[] = [
  { group: "Base" },
  { name: "Base", value: "Body", alt: true },
  { name: "Tool", value: "Fusion" },
  { name: "Placement", value: "[(0,00 0,00 1,00); 0,00 °; (0,00 mm\u00a0 0,00 mm\u00a0 0,00 mm)]", alt: true, expand: true },
  { name: "Label", value: "Cut" },
  { group: "Boolean" },
  { name: "Refine", value: "false" },
];

export default function App() {
  return (
    <Desktop>
      <GlobalStyle />
      <TopBar>
        <BarGroup>
          <BarButton type="button">Activities</BarButton>
          <BarButton type="button">
            <Logo size={16} hole="#4b4b43" />
            FreeCAD <Down />
          </BarButton>
        </BarGroup>
        <Clock type="button">lun 12:07 <Dot /></Clock>
        <BarGroup $end>
          <TrayGroup $gap={27} $after={8}>
            <svg width="21" height="14" viewBox="0 0 21 14"><rect width="14" height="14" rx="1" fill="#b9b7b2" /><path d="m14 7 6-6v12z" fill="#b9b7b2" /><circle cx="7" cy="7" r="4" fill="#e0412b" /></svg>
            <Cone size={20} />
            <svg width="20" height="20" viewBox="0 0 20 20"><path d="M0 2h13v16H0z" fill="#ab8655" /><path d="M4 0h5v4H4z" fill="#d5d3cc" /><path d="M9 7h11v12H9z" fill="#efefec" stroke="#bbb" strokeWidth=".5" /><path d="M11 10h7M11 12.500h6M11 15h5" stroke="#999" /></svg>
          </TrayGroup>
          <BarButton type="button" $gap={10}>it <Down /></BarButton>
          <TrayGroup $gap={12}>
            <span />
            <svg width="15" height="15" viewBox="0 0 15 15" fill="#dfdbd2"><path d="M6 0h1.500l2.500 6h3q2 .2 2 1.500T13 9h-3l-2.500 6H6l1-6H3.500L2 11H1l.5-3.500L1 4h1l1.500 2H7z" /></svg>
            <svg width="16" height="14" viewBox="0 0 16 14"><path d="M0 4.500h3L7.500 1v12L3 9.500H0z" fill="#dfdbd2" /><path d="M9 4.500q2 2.500 0 5M11 2.500q4 4.500 0 9" fill="none" stroke="#dfdbd2" strokeWidth="1.300" /><path d="M13 .8q5 6.200 0 12.400" fill="none" stroke="#8d8b84" strokeWidth="1.300" /></svg>
            <svg width="15" height="17" viewBox="0 0 15 17"><path d="M4 0h4v2h3v8M1 2h3M1 2v14h7" fill="none" stroke="#dfdbd2" strokeWidth="2" /><path d="M3 6h6M3 9h6M3 12h4" stroke="#dfdbd2" strokeWidth="1.500" /><path d="m12 7-5 6h3l-1 4 5-6h-3z" fill="#dfdbd2" /></svg>
            <Down />
          </TrayGroup>
        </BarGroup>
      </TopBar>

      <Body>
        <Dock>
          {Object.keys(dockIcons).map((name) => (
            <DockButton key={name} type="button" aria-label={name} $active={name === "FreeCAD"}>
              {runningCount[name] && (
                <Running>{Array.from({ length: runningCount[name] }, (_, i) => <i key={i} />)}</Running>
              )}
              {name === "FreeCAD" ? <Logo size={29} /> : name === "VLC" ? <Cone size={27} /> : (
                <svg width="28" height="28" viewBox="0 0 29 29">{dockIcons[name]}</svg>
              )}
            </DockButton>
          ))}
          <DockButton type="button" aria-label="Show applications" $last>
            <svg width="20" height="20" viewBox="0 0 20 20" fill="#eeeeec">
              {[2, 10, 18].map((y) => [2, 10, 18].map((x) => <circle key={`${x}-${y}`} cx={x} cy={y} r="2" />))}
            </svg>
          </DockButton>
        </Dock>

        <Window>
          <TitleBar>
            <TitleText>FreeCAD</TitleText>
            <WindowControls>
              <RoundButton type="button" aria-label="Minimize" $tone="#55554f"><svg width="8" height="8"><path d="M0 4.500h8" stroke="#2b2b27" /></svg></RoundButton>
              <RoundButton type="button" aria-label="Maximize" $tone="#55554f"><svg width="8" height="8"><path d="M.5 1.500h7v5h-7z" stroke="#2b2b27" fill="none" /></svg></RoundButton>
              <RoundButton type="button" aria-label="Close window" $tone="#a9431f"><SmallX /></RoundButton>
            </WindowControls>
          </TitleBar>
          <MenuBar>
            {menus.map((m) => <MenuButton key={m} type="button"><u>{m[0]}</u>{m.slice(1)}</MenuButton>)}
          </MenuBar>
          <ToolArea>
            <ToolRow>
              {renderTools(": New Open Save Print | Cut Copy Paste | Undo v Redo w | Refresh | Help :")}
              <Combo
                id="workbench" label="Workbench" value="Path" dim width={190}
                icon={<svg width="18" height="18" viewBox="0 0 18 18"><path d="M0 13h17v4H0z" fill="#a5782a" stroke="#5e4312" /><path d="M3 1h11v3H3zM6 4h5v10H6z" fill="#9a9b97" stroke="#4b4c49" /><path d="m6 8 5-3M6 11l5-3M6 14l5-3" stroke="#4b4c49" /></svg>}
              />
              <Grip />
              {renderTools("Record Stop Macro Play : FitAll FitSel Style v | Iso | Front Top Right | Rear Bottom Left | Measure : Part Group")}
            </ToolRow>
            <ToolRow>
              {renderTools(": Job Post : Inspect Simulate Tools Stock : Contour Profile ProfileEdges Pocket Drilling Engrave Face Helix Surface : Dressup Array Copies")}
            </ToolRow>
          </ToolArea>

          <Work>
            <SidePanel>
              <PanelHead>
                <PanelTitle>Combo View</PanelTitle>
                <PlainButton type="button" aria-label="Float panel">
                  <svg width="12" height="12" viewBox="0 0 12 12" fill="none" stroke="#454643"><rect x=".5" y=".5" width="11" height="11" rx="1.500" /><path d="M5 2.500h4.500V7H5zM5 5H2.500v4.500H7V7" /></svg>
                </PlainButton>
                <PlainButton type="button" aria-label="Close panel">
                  <svg width="12" height="12" viewBox="0 0 12 12" fill="none" stroke="#454643"><rect x=".5" y=".5" width="11" height="11" rx="1.500" /><path d="m3 3 6 6m0-6L3 9" strokeWidth="2" /></svg>
                </PlainButton>
              </PanelHead>
              <TabRow>
                <Tab type="button" $active>Model</Tab>
                <Tab type="button">Tasks</Tab>
              </TabRow>
              <Pane>
                <TreeBox>
                  <TreeHead><TreeHeadCell>Labels &amp; Attributes</TreeHeadCell></TreeHead>
                  <ul>
                    <TreeRow $level={0}>Application</TreeRow>
                    <TreeRow $level={1} $bold>
                      <Triangle open />
                      <svg width="16" height="16" viewBox="0 0 16 16"><path d="M1 .5h13v15H1z" fill="#a9aaa6" stroke="#4f504d" /><circle cx="10" cy="5" r="4" fill="#8e1c1c" /><path d="m2 7 4-2 4 2v5l-4 2.500L2 12z" fill="#1e3a66" stroke="#12233f" /></svg>
                      tutorial 3d model
                    </TreeRow>
                    <TreeRow $level={3} $muted>
                      <svg width="16" height="16" viewBox="0 0 16 16"><path d="m0 3 7-2 9 2v9l-7 4-9-3z" fill="#6f706d" /><path d="m9 5 7-2v9l-7 4z" fill="#585956" /><path d="m0 3 9 2" stroke="#8d8e8a" /></svg>
                      rect4241
                    </TreeRow>
                    <TreeRow $level={2} $selected>
                      <Triangle />
                      <svg width="16" height="16" viewBox="0 0 16 16"><circle cx="5.500" cy="10" r="5" fill="#504f5c" stroke="#37363f" strokeWidth=".7" /><circle cx="10.500" cy="5.500" r="4.800" fill="#b49a8c" stroke="#6b5a50" strokeWidth=".7" /></svg>
                      Cut
                    </TreeRow>
                  </ul>
                </TreeBox>
                <HSplit />
                <PropFrame>
                  <PropBox>
                    <PropTable>
                      <colgroup><col width="20" /><col width="79" /><col /></colgroup>
                      <thead><tr><HeadCell colSpan={2} scope="col">Property</HeadCell><HeadCell scope="col">Value</HeadCell></tr></thead>
                      <tbody>
                        {properties.map((p, i) =>
                          p.group ? (
                            <tr key={i}><GroupCell colSpan={3}>{p.group}</GroupCell></tr>
                          ) : (
                            <PropRow key={i} $alt={p.alt}>
                              <td>{p.expand && <Triangle />}</td>
                              <th scope="row">{p.name}</th>
                              <td>{p.value}</td>
                            </PropRow>
                          )
                        )}
                      </tbody>
                    </PropTable>
                  </PropBox>
                </PropFrame>
                <TabRow $bottom>
                  <Tab type="button" $bottom>View</Tab>
                  <Tab type="button" $bottom $active>Data</Tab>
                </TabRow>
              </Pane>
            </SidePanel>
            <VSplit />
            <Mdi>
              <Viewport>
                <svg viewBox="0 0 1391 887">
                  <path d="M562 108 1001 361v6L562 620 124 367v-6z" fill="#137a18" stroke="#0f6a14" />
                  <path d="M562 111 998 362 562 612 127 362z" fill="#6bb26b" />
                  <path d="m126 365 436 251 437-251" fill="none" stroke="#4fb04f" strokeDasharray="3 2" />
                </svg>
                <AxisCross>
                  <svg width="40" height="56" viewBox="0 0 40 56">
                    <path d="M6 37V10" stroke="#1c1c66" strokeWidth="2" /><path d="M6 7 3 19h6z" fill="#1c1c66" />
                    <path d="m6 37 16-9" stroke="#1e6a22" strokeWidth="2" /><path d="m26 26-11 4 3 4z" fill="#1e6a22" />
                    <path d="m6 37 20 12" stroke="#6a1c1c" strokeWidth="2" /><path d="M32 52 20 48l3-5z" fill="#6a1c1c" />
                    <text x="8" y="8" fontSize="9" fontFamily="DejaVu Sans, sans-serif">Z</text>
                    <text x="27" y="27" fontSize="9" fontFamily="DejaVu Sans, sans-serif">Y</text>
                    <text x="33" y="52" fontSize="9" fontFamily="DejaVu Sans, sans-serif">X</text>
                  </svg>
                </AxisCross>
              </Viewport>
              <MdiTabs>
                <MdiTab type="button" $bottom><Logo size={16} hole="#9a9b96" dim />Start page <CloseMark /></MdiTab>
                <MdiTab type="button" $bottom $active><Logo size={16} hole="#acada9" dim />tutorial 3d model : 1* <CloseMark /></MdiTab>
              </MdiTabs>
            </Mdi>
          </Work>
        </Window>
      </Body>

      <Overlay>
        <Dialog role="dialog" aria-labelledby="export-title">
          <DialogTitle>
            <TitleText id="export-title">Export file</TitleText>
            <WindowControls>
              <RoundButton type="button" aria-label="Close dialog" $tone="#e55c2c"><SmallX /></RoundButton>
            </WindowControls>
          </DialogTitle>
          <DialogBody onSubmit={(e) => e.preventDefault()}>
            <LookRow>
              <label htmlFor="look-in">Look in:</label>
              <Combo id="look-in" value="/home/chihauccisoi.../map/videotutorial" icon={<Folder size={17} />} />
              <NavButtons>
                <NavButton type="button" aria-label="Back"><svg width="12" height="16" viewBox="0 0 12 16"><path d="M9 1.500 3.500 8 9 14.500" fill="none" stroke="#8e8e8a" strokeWidth="3.500" /><path d="M9 1.500 3.500 8 9 14.500" fill="none" stroke="#c7c7c3" strokeWidth="1.800" /></svg></NavButton>
                <NavButton type="button" aria-label="Forward"><svg width="12" height="16" viewBox="0 0 12 16"><path d="M3 1.500 8.500 8 3 14.500" fill="none" stroke="#8e8e8a" strokeWidth="3.500" /><path d="M3 1.500 8.500 8 3 14.500" fill="none" stroke="#c7c7c3" strokeWidth="1.800" /></svg></NavButton>
                <NavButton type="button" aria-label="Parent directory"><svg width="16" height="12" viewBox="0 0 16 12"><path d="M1.500 9.500 8 3.500l6.500 6" fill="none" stroke="#b9501c" strokeWidth="3.500" /><path d="M1.500 9.500 8 3.500l6.500 6" fill="none" stroke="#f08a4c" strokeWidth="1.800" /></svg></NavButton>
                <NavButton type="button" aria-label="Create new folder"><Folder size={16} plus /></NavButton>
                <NavButton type="button" aria-label="List view" $on><svg width="16" height="16" viewBox="0 0 16 16"><rect x="1" y="1" width="14" height="14" rx="2" fill="#fff" stroke="#1c2733" strokeWidth="1.500" /><path d="M4.500 4.500h3v3h-3zM9 4.500h3v3H9zM4.500 9h3v3h-3zM9 9h3v3H9z" fill="#111" /></svg></NavButton>
                <NavButton type="button" aria-label="Detail view"><svg width="16" height="16" viewBox="0 0 16 16"><rect x="1" y="1" width="14" height="14" rx="2" fill="#fff" stroke="#1c2733" strokeWidth="1.500" /><path d="M4.500 4.500h7M4.500 7h7M4.500 9.500h7M4.500 12h7" stroke="#222" strokeWidth="1.200" /></svg></NavButton>
              </NavButtons>
            </LookRow>
            <Lists>
              <FileList>
                {places.map((p) => <FileRow key={p}><Folder size={24} />{p}</FileRow>)}
              </FileList>
              <ListSplit />
              <FileList>
                <FileRow><Folder size={24} />tutorial stuff</FileRow>
              </FileList>
            </Lists>
            <FieldRow>
              <label htmlFor="file-name">File <u>n</u>ame:</label>
              <FieldCell><NameBox><NameInput id="file-name" defaultValue="map_3dmodel" /><Caret /></NameBox></FieldCell>
              <PushButton type="submit" $primary><u>S</u>ave</PushButton>
            </FieldRow>
            <FieldRow>
              <label htmlFor="file-type">Files of type:</label>
              <FieldCell><Combo id="file-type" value="STL Mesh (*.stl *.ast)" /></FieldCell>
              <PushButton type="button"><u>C</u>ancel</PushButton>
            </FieldRow>
          </DialogBody>
        </Dialog>
      </Overlay>

      <Pointer>
        <svg width="15" height="23" viewBox="0 0 15 23"><path d="M1 1v17l4-4 3 7.500 3-1.500-3-7h6z" fill="#fff" stroke="#111" strokeWidth="1.200" /></svg>
      </Pointer>
      <Defs />
    </Desktop>
  );
}
